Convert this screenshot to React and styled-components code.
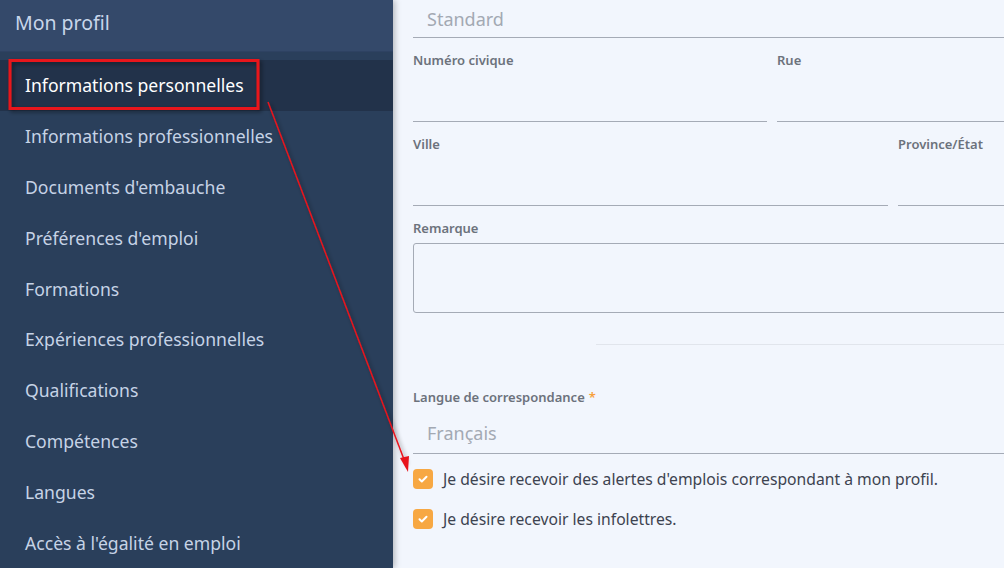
import React from 'react';
import styled, { createGlobalStyle } from 'styled-components';

const Global = createGlobalStyle`
  html, body { margin: 0; padding: 0; }
  body { font-family: "Noto Sans", "Open Sans", sans-serif; }
`;

const Page = styled.div`
  position: relative;
  width: 1004px;
  height: 568px;
  overflow: hidden;
  display: flex;
  background: #f2f6fd;
`;

const Sidebar = styled.nav`
  width: 393px;
  flex-shrink: 0;
  background: #2a3f5b;
  display: flex;
  flex-direction: column;
  z-index: 1;
  box-shadow: 2px 0 6px rgba(0, 0, 0, 0.25);
`;

const SideHeader = styled.div`
  height: 52px;
  background: #34496a;
  color: #c8d6ea;
  font-size: 19.5px;
  padding: 0 15px 6px;
  display: flex;
  align-items: center;
  margin-bottom: 8px;
  box-sizing: border-box;
  border-bottom: 1px solid #2e4262;
`;

const NavItem = styled.div`
  height: 51px;
  display: flex;
  align-items: center;
  padding: 0 25px;
  font-size: 17.6px;
  color: ${p => (p.$active ? '#ffffff' : '#c6d3e6')};
  background: ${p => (p.$active ? '#22324a' : 'transparent')};
`;

const Main = styled.main`
  flex: 1;
  padding: 0 0 0 20px;
  overflow: hidden;
`;

const Form = styled.div`
  width: 680px;
  display: flex;
  flex-direction: column;
`;

const SelectBox = styled.div`
  height: ${p => p.$h || 38}px;
  border-bottom: 1px solid #a5abb6;
  color: #a3a9b3;
  font-size: 18px;
  display: flex;
  align-items: ${p => (p.$h ? 'flex-end' : 'center')};
  padding: 0 0 ${p => (p.$h ? 8 : 0)}px 14px;
  box-sizing: border-box;
`;

const Row = styled.div`
  display: grid;
  grid-template-columns: ${p => p.$cols};
  gap: 10px;
  margin-top: 12px;
`;

const Field = styled.div`
  display: flex;
  flex-direction: column;
  margin-top: ${p => p.$mt || 0}px;
`;

const Label = styled.label`
  font-size: 13px;
  font-weight: 600;
  color: #6c727c;
  height: 20px;
  line-height: 20px;
`;

const Input = styled.div`
  height: 51px;
  border-bottom: 1px solid #a5abb6;
`;

const TextArea = styled.div`
  height: 68px;
  margin-top: 5px;
  border: 1px solid #a5abb6;
  border-radius: 3px;
`;

const Separator = styled.div`
  margin: 31px 0 0 183px;
  border-top: 1px solid #e1e5ec;
`;

const Required = styled.span`
  color: #f7a03c;
  margin-left: 4px;
`;

const Check = styled.div`
  display: flex;
  align-items: center;
  gap: 10px;
  height: 40px;
  font-size: 15.7px;
  color: #3d4350;
  margin-top: ${p => p.$mt || 0}px;
`;

const Box = styled.span`
  width: 20px;
  height: 20px;
  border-radius: 4px;
  background: #f7a843;
  display: flex;
  align-items: center;
  justify-content: center;
`;

const Overlay = styled.svg`
  position: absolute;
  left: 0;
  top: 0;
  pointer-events: none;
  z-index: 2;
`;

const nav = [
  'Informations personnelles',
  'Informations professionnelles',
  "Documents d'embauche",
  "Préférences d'emploi",
  'Formations',
  'Expériences professionnelles',
  'Qualifications',
  'Compétences',
  'Langues',
  "Accès à l'égalité en emploi",
];

const Tick = () => (
  <svg width="12" height="12" viewBox="0 0 12 12">
    <path d="M2.5 6.3l2.3 2.2 4.7-4.8" stroke="#fff" strokeWidth="2" fill="none" strokeLinecap="round" strokeLinejoin="round" />
  </svg>
);

export default function App() {
  return (
    <Page>
      <Global />
      <Sidebar>
        <SideHeader>Mon profil</SideHeader>
        {nav.map((n, i) => (
          <NavItem key={n} $active={i === 0}>{n}</NavItem>
        ))}
      </Sidebar>
      <Main>
        <Form>
          <SelectBox>Standard</SelectBox>
          <Row $cols="354px 1fr">
            <Field><Label>Numéro civique</Label><Input /></Field>
            <Field><Label>Rue</Label><Input /></Field>
          </Row>
          <Row $cols="475px 1fr">
            <Field><Label>Ville</Label><Input /></Field>
            <Field><Label>Province/État</Label><Input /></Field>
          </Row>
          <Field $mt={12}>
            <Label>Remarque</Label>
            <TextArea />
          </Field>
          <Separator />
          <Field $mt={42}>
            <Label>Langue de correspondance<Required>*</Required></Label>
          </Field>
          <SelectBox $h={47}>Français</SelectBox>
          <Check $mt={5}><Box><Tick /></Box>Je désire recevoir des alertes d'emplois correspondant à mon profil.</Check>
          <Check><Box><Tick /></Box>Je désire recevoir les infolettres.</Check>
        </Form>
      </Main>
      <Overlay width="1004" height="568">
        <defs>
          <filter id="sh" x="-10%" y="-30%" width="130%" height="170%">
            <feDropShadow dx="2" dy="2" stdDeviation="2" floodColor="#000" floodOpacity="0.45" />
          </filter>
        </defs>
        <rect x="10" y="60.5" width="248" height="48" fill="none" stroke="#e8141c" strokeWidth="3" filter="url(#sh)" />
        <line x1="268" y1="102" x2="405" y2="462" stroke="#e8141c" strokeWidth="1.5" filter="url(#sh)" />
        <path d="M408 472 L400 458 L409 456 Z" fill="#e8141c" />
      </Overlay>
    </Page>
  );
}
